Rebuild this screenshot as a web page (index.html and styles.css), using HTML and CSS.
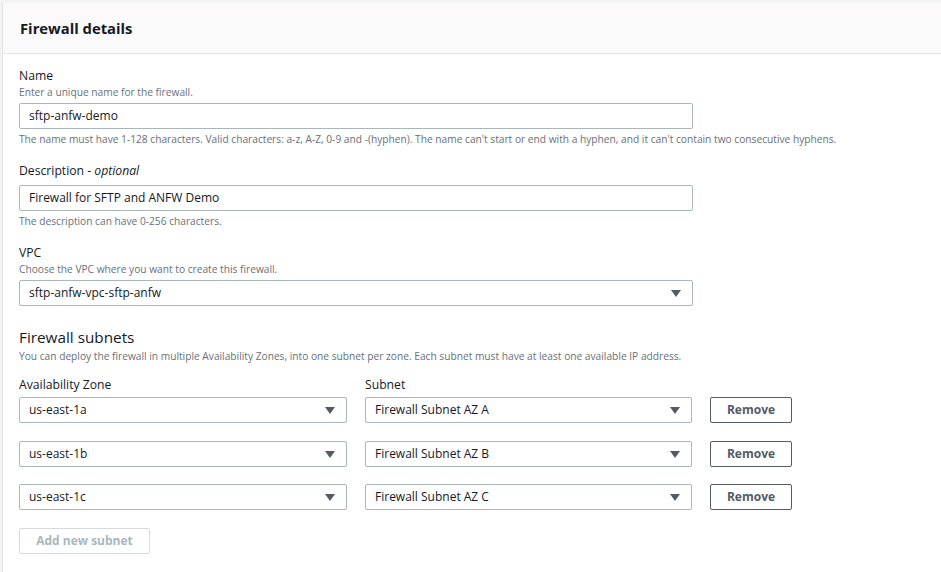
FILE: index.html
```html
<!DOCTYPE html>
<html lang="en">
<head>
	<meta charset="UTF-8">
	<title>Firewall details</title>
	<link rel="stylesheet" href="styles.css">
</head>
<body>

	<div class="panel">

		<div class="panel-header">
			<h2>Firewall details</h2>
		</div>

		<div class="panel-body">

			<div class="field">
				<div class="label">Name</div>
				<div class="desc">Enter a unique name for the firewall.</div>
				<div class="input wide">sftp-anfw-demo</div>
				<div class="hint">The name must have 1-128 characters. Valid characters: a-z, A-Z, 0-9 and -(hyphen). The name can't start or end with a hyphen, and it can't contain two consecutive hyphens.</div>
			</div>

			<div class="field">
				<div class="label">Description - <i>optional</i></div>
				<div class="input wide">Firewall for SFTP and ANFW Demo</div>
				<div class="hint">The description can have 0-256 characters.</div>
			</div>

			<div class="field">
				<div class="label">VPC</div>
				<div class="desc">Choose the VPC where you want to create this firewall.</div>
				<div class="input select wide">sftp-anfw-vpc-sftp-anfw</div>
			</div>

			<div class="subnets">
				<h3>Firewall subnets</h3>
				<div class="desc">You can deploy the firewall in multiple Availability Zones, into one subnet per zone. Each subnet must have at least one available IP address.</div>

				<div class="subnet-grid">
					<div class="label">Availability Zone</div>
					<div class="label">Subnet</div>
					<div></div>

					<div class="input select">us-east-1a</div>
					<div class="input select">Firewall Subnet AZ A</div>
					<div class="button">Remove</div>

					<div class="input select">us-east-1b</div>
					<div class="input select">Firewall Subnet AZ B</div>
					<div class="button">Remove</div>

					<div class="input select">us-east-1c</div>
					<div class="input select">Firewall Subnet AZ C</div>
					<div class="button">Remove</div>
				</div>

				<div class="button disabled">Add new subnet</div>
			</div>

		</div>

	</div>

</body>
</html>
```

FILE: styles.css
```css
* {
	margin: 0;
	padding: 0;
	box-sizing: border-box;
	font-family: "Open Sans", sans-serif;
}

body {
	background-color: #f2f3f3;
	padding: 3px 0 0 2px;
	color: #16191f;
}

.panel {
	background-color: #fff;
	border-left: 1px solid #e1e4e4;
	min-height: 569px;
}

.panel-header {
	background-color: #fafafa;
	border-bottom: 1px solid #e4e7e7;
	height: 51px;
	padding: 14px 17px 0;
}

.panel-header h2 {
	font-size: 14.8px;
	font-weight: 700;
	line-height: 22px;
}

.panel-body {
	padding: 13px 16px 0;
}

.field {
	margin-bottom: 16px;
}

.label {
	font-size: 12.2px;
	line-height: 18px;
}

.desc {
	font-size: 10.2px;
	line-height: 14px;
	color: #687078;
}

.input {
	height: 26px;
	margin-top: 4px;
	border: 1px solid #aab7b8;
	border-radius: 2px;
	padding: 0 9px;
	font-size: 12px;
	line-height: 24px;
	position: relative;
}

.label + .input {
	margin-top: 5px;
}

.input.wide {
	width: 674px;
}

.select::after {
	content: "";
	position: absolute;
	right: 11px;
	top: 9px;
	border-left: 5px solid transparent;
	border-right: 5px solid transparent;
	border-top: 7px solid #545b64;
}

.hint {
	font-size: 10.2px;
	line-height: 14px;
	color: #687078;
	margin-top: 3px;
}

.subnets {
	padding-top: 4px;
}

.subnets h3 {
	font-size: 15.3px;
	font-weight: 400;
	line-height: 22px;
}

.subnets > .desc {
	margin-top: 1px;
}

.subnet-grid {
	display: grid;
	grid-template-columns: 328px 327px 82px;
	column-gap: 18px;
	row-gap: 17.5px;
	margin-top: 13px;
	align-items: end;
}

.subnet-grid .label {
	margin-bottom: -14.5px;
}

.subnet-grid .input {
	margin-top: 0;
}

.button {
	height: 26px;
	border: 1px solid #545b64;
	border-radius: 2px;
	font-size: 12px;
	font-weight: 700;
	line-height: 24px;
	color: #545b64;
	text-align: center;
}

.button.disabled {
	width: 131px;
	margin-top: 18px;
	border-color: #d5dbdb;
	color: #aab7b8;
}
```
